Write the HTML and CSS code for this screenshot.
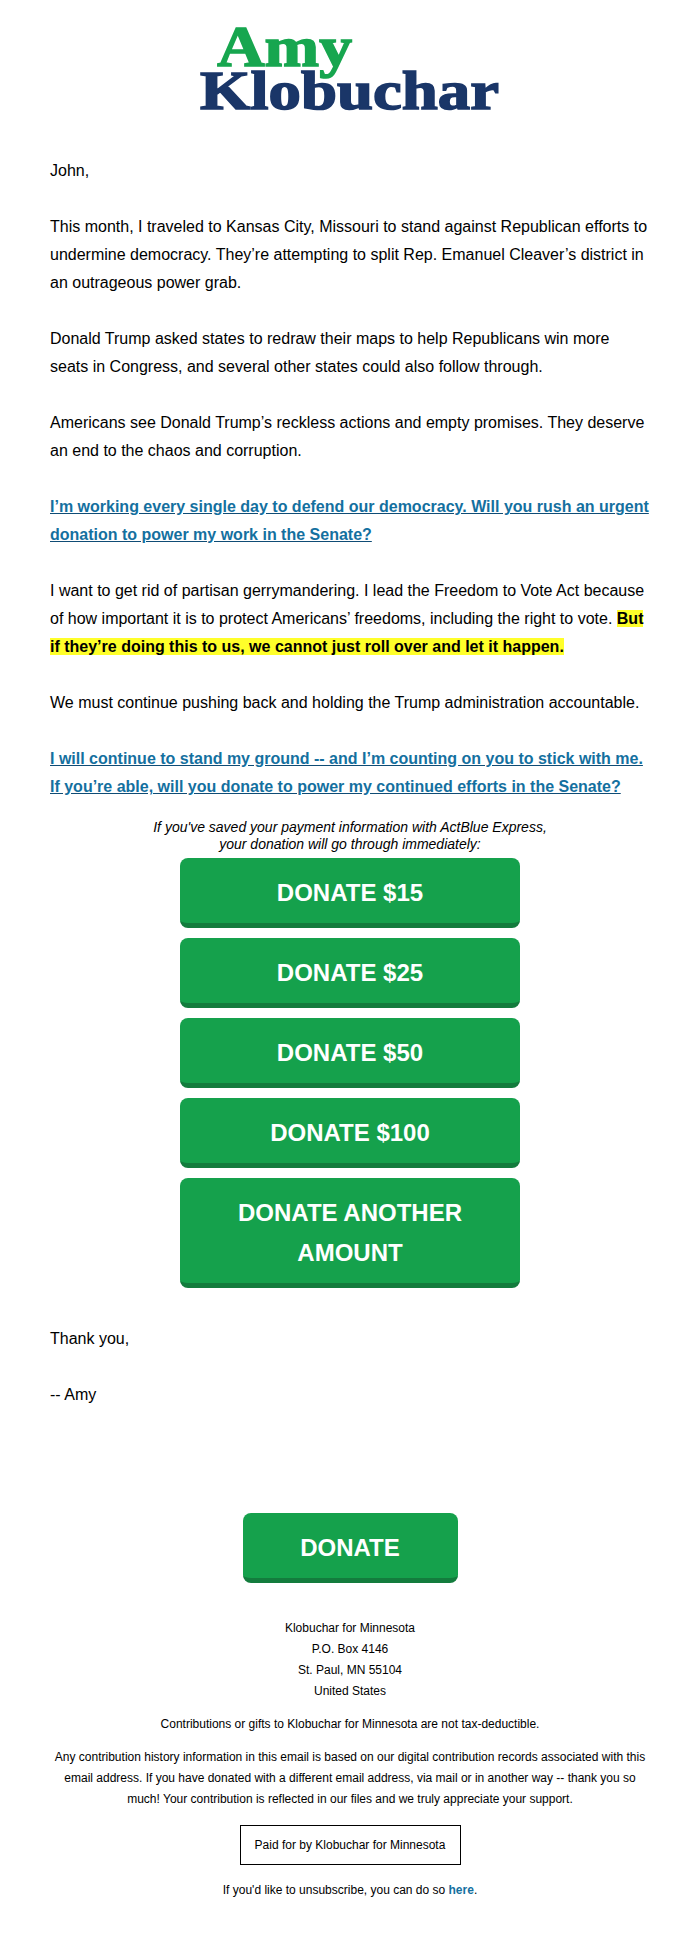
FILE: index.html
```html
<!DOCTYPE html>
<html lang="en">
<head>
<meta charset="utf-8">
<title>Amy Klobuchar</title>
<link rel="stylesheet" href="styles.css">
</head>
<body>
<main class="email">
  <header class="logo">
    <div class="logo-amy">Amy</div>
    <div class="logo-klobuchar">Klobuchar</div>
  </header>
  <section class="letter">
    <p>John,</p>
    <p>This month, I traveled to Kansas City, Missouri to stand against Republican efforts to undermine democracy. They’re attempting to split Rep. Emanuel Cleaver’s district in an outrageous power grab.</p>
    <p>Donald Trump asked states to redraw their maps to help Republicans win more seats in Congress, and several other states could also follow through.</p>
    <p>Americans see Donald Trump’s reckless actions and empty promises. They deserve an end to the chaos and corruption.</p>
    <p><a class="cta" href="#">I’m working every single day to defend our democracy. Will you rush an urgent donation to power my work in the Senate?</a></p>
    <p>I want to get rid of partisan gerrymandering. I lead the Freedom to Vote Act because of how important it is to protect Americans’ freedoms, including the right to vote. <strong class="mark">But if they’re doing this to us, we cannot just roll over and let it happen.</strong></p>
    <p>We must continue pushing back and holding the Trump administration accountable.</p>
    <p class="last"><a class="cta" href="#">I will continue to stand my ground -- and I’m counting on you to stick with me. If you’re able, will you donate to power my continued efforts in the Senate?</a></p>
  </section>
  <p class="express">If you've saved your payment information with ActBlue Express,<br>your donation will go through immediately:</p>
  <nav class="donate-list">
    <a class="btn" href="#">DONATE $15</a>
    <a class="btn" href="#">DONATE $25</a>
    <a class="btn" href="#">DONATE $50</a>
    <a class="btn" href="#">DONATE $100</a>
    <a class="btn" href="#">DONATE ANOTHER AMOUNT</a>
  </nav>
  <section class="closing">
    <p>Thank you,</p>
    <p>-- Amy</p>
  </section>
  <a class="btn btn-single" href="#">DONATE</a>
  <footer class="footer">
    <p>Klobuchar for Minnesota<br>P.O. Box 4146<br>St. Paul, MN 55104<br>United States</p>
    <p>Contributions or gifts to Klobuchar for Minnesota are not tax-deductible.</p>
    <p>Any contribution history information in this email is based on our digital contribution records associated with this email address. If you have donated with a different email address, via mail or in another way -- thank you so much! Your contribution is reflected in our files and we truly appreciate your support.</p>
    <div class="paid">Paid for by Klobuchar for Minnesota</div>
    <p>If you'd like to unsubscribe, you can do so <a class="here" href="#">here</a>.</p>
  </footer>
</main>
</body>
</html>
```
FILE: styles.css
```css
* { box-sizing: border-box; }
html, body { margin: 0; padding: 0; background: #fff; }
body { font-family: "Liberation Sans", Arial, sans-serif; color: #000; height: 1949px; overflow: hidden; }
.email { width: 700px; display: flex; flex-direction: column; align-items: center; }

.logo { width: 100%; height: 157px; padding-top: 22px; display: flex; flex-direction: column; align-items: center; font-family: "Liberation Serif", serif; font-weight: 700; }
.logo-amy { color: #17a64f; font-size: 58px; line-height: 50px; height: 46px; transform: scaleX(1.13); -webkit-text-stroke: 1.5px #17a64f; margin-right: 130px; }
.logo-klobuchar { color: #1a3668; font-size: 54px; line-height: 46px; transform: scaleX(1.2); -webkit-text-stroke: 1.5px #1a3668; }

.letter { width: 600px; font-size: 16px; line-height: 28px; }
.letter p { margin: 0 0 28px; }
.letter p.last { margin: 0; }
.cta { color: #14709f; font-weight: 700; text-decoration: underline; text-decoration-color: #0f4c75; }
.mark { background: #ffff2a; }

.express { margin: 18px 0 0; width: 600px; text-align: center; font-style: italic; font-size: 14px; line-height: 17px; }

.donate-list { width: 340px; margin-top: 5px; display: flex; flex-direction: column; gap: 10px; }
.btn { display: block; background: #15a14c; border-bottom: 5px solid #137c3d; border-radius: 8px; color: #fff; font-size: 24px; font-weight: 700; line-height: 40px; padding: 15px 24px 10px; text-align: center; text-decoration: none; }
.btn-single { width: 215px; padding-left: 0; padding-right: 0; }

.closing { width: 600px; margin-top: 37px; font-size: 16px; line-height: 28px; height: 188px; }
.closing p { margin: 0 0 28px; }

.footer { width: 600px; margin-top: 35px; text-align: center; font-size: 12px; line-height: 21px; }
.footer p { margin: 0 0 12px; }
.paid { width: 221px; height: 40px; margin: 15px auto; border: 1px solid #000; line-height: 38px; }
.here { color: #14709f; font-weight: 700; text-decoration: none; }
```
